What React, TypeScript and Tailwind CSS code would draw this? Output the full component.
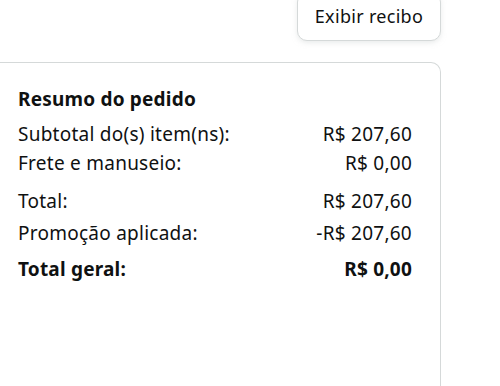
export default function App() {
  const rows = [
    { label: 'Subtotal do(s) item(ns):', value: 'R$ 207,60', cls: 'mt-[11px]' },
    { label: 'Frete e manuseio:', value: 'R$ 0,00', cls: 'mt-[5px]' },
    { label: 'Total:', value: 'R$ 207,60', cls: 'mt-[14px]' },
    { label: 'Promoção aplicada:', value: '-R$ 207,60', cls: 'mt-[8px]' },
  ];

  return (
    <div className="w-[500px] h-[386px] overflow-hidden bg-white text-[#0f1111] font-['Noto_Sans',sans-serif]">
      <div className="w-[441px] flex flex-col items-end">
        {/* Receipt button */}
        <button className="-mt-[8px] h-[49px] w-[144px] rounded-[10px] border border-[#d5d9d9] bg-white shadow-[0_2px_5px_0_rgba(213,217,217,0.5)] text-[18px] tracking-[0.3px] text-[#0f1111]">
          Exibir recibo
        </button>

        {/* Order summary */}
        <div className="mt-[21px] w-full h-[340px] border-y border-r border-[#d5d9d9] rounded-tr-[10px] pl-[18px] pr-[28px] pt-[24px]">
          <h2 className="text-[19px] font-bold leading-[24px] tracking-[0.2px]">Resumo do pedido</h2>
          {rows.map((r) => (
            <div key={r.label} className={`flex justify-between text-[19px] leading-[24px] tracking-[0.25px] ${r.cls}`}>
              <span>{r.label}</span>
              <span>{r.value}</span>
            </div>
          ))}
          <div className="mt-[12px] flex justify-between text-[19px] font-bold leading-[24px] tracking-[0.2px]">
            <span>Total geral:</span>
            <span>R$ 0,00</span>
          </div>
        </div>
      </div>
    </div>
  );
}
